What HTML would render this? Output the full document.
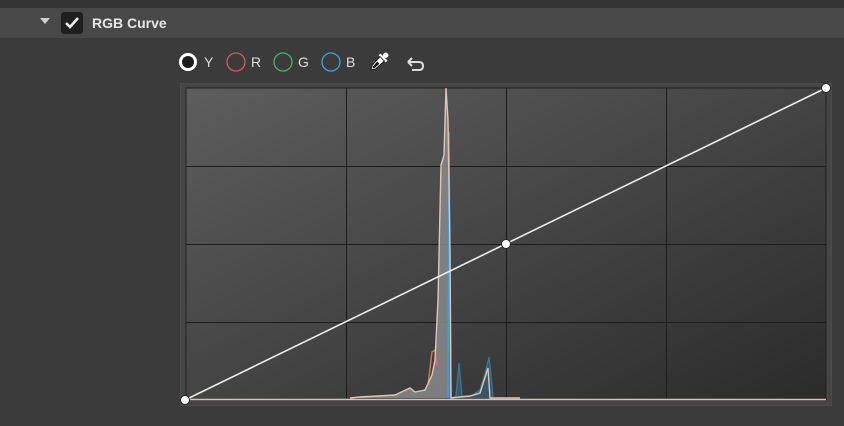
<!DOCTYPE html>
<html><head><meta charset="utf-8"><style>
html,body{margin:0;padding:0}
body{width:844px;height:426px;background:#3b3b3b;position:relative;overflow:hidden;font-family:"Liberation Sans",sans-serif}
.top{position:absolute;left:0;top:0;width:844px;height:8px;background:#333}
.hdr{position:absolute;left:0;top:8px;width:844px;height:30px;background:#484848}
.lbl{position:absolute;font-size:14px;color:#ddd;top:54px}
</style></head><body>
<div class="top"></div>
<div class="hdr"></div>
<svg width="844" height="426" style="position:absolute;left:0;top:0">
<defs>
<linearGradient id="g" x1="0" y1="0" x2="1" y2="1">
<stop offset="0" stop-color="#5d5d5d"/><stop offset="1" stop-color="#2b2b2b"/></linearGradient>
</defs>
<polygon points="40,18 50,18 45,24" fill="#cfcfcf"/>
<rect x="61" y="12" width="22" height="22" rx="3" fill="#1f1f1f"/>
<polyline points="66,23 70,27 78,18" fill="none" stroke="#eee" stroke-width="2.6"/>
<text x="92" y="28" font-family="Liberation Sans" font-weight="bold" font-size="14" fill="#e6e6e6">RGB Curve</text>
<circle cx="188" cy="62" r="7.5" fill="#1c1c1c" stroke="#fff" stroke-width="3"/>
<circle cx="236" cy="62" r="9" fill="none" stroke="#d25a5a" stroke-width="1.3"/>
<circle cx="283" cy="62" r="9" fill="none" stroke="#48b06a" stroke-width="1.3"/>
<circle cx="331" cy="62" r="9" fill="none" stroke="#3ba3d8" stroke-width="1.3"/>
<g transform="rotate(45 379 62)">
<rect x="376.5" y="50" width="5" height="5" rx="2" fill="#fff"/>
<rect x="374" y="55" width="10" height="2.5" fill="#fff"/>
<path d="M376,57.5 L382,57.5 L381.5,69 L379,73 L376.5,69 Z" fill="#fff" stroke="#111" stroke-width="0.8"/>
<path d="M377.5,63 L380.5,63 L380.2,69 L379,71 L377.8,69 Z" fill="#111"/>
</g>
<path d="M408,62 L419,62 Q423,62 423,66 Q423,70 419,70 L412,70 M408,62 L412,58 M408,62 L412,66" stroke="#ddd" stroke-width="2" fill="none"/>
<rect x="180.5" y="83.5" width="651" height="322" fill="#454545" stroke="#4c4c4c"/>
<rect x="186" y="88" width="640" height="312" fill="url(#g)" stroke="#222" stroke-width="1"/>
<g stroke="#1c1c1c" stroke-width="1">
<line x1="346.5" y1="88" x2="346.5" y2="400"/><line x1="506.5" y1="88" x2="506.5" y2="400"/><line x1="666.5" y1="88" x2="666.5" y2="400"/>
<line x1="186" y1="166.5" x2="826" y2="166.5"/><line x1="186" y1="244.5" x2="826" y2="244.5"/><line x1="186" y1="322.5" x2="826" y2="322.5"/>
</g>
<polygon points="350,398 360,397 395,395 410,388 415,392 425,390 432,375 435,360 438,300 441,165 444,155 446,88 448,120 450,250 451,398" fill="#8a8a8a" opacity="0.85"/>
<polyline points="452,398 456,396 459,363 462,396 470,397 480,390 485,374 489,357 491,375 493,398" fill="#3a6a85" opacity="0.6" stroke="#3ba3d8" stroke-width="1.2"/>
<polyline points="428,385 432,352 435,350 437,365" fill="none" stroke="#c8775a" stroke-width="1.5"/>
<polyline points="448,398 449,132 451,398" fill="#3b8ab8" stroke="#3ba3d8" stroke-width="1.3"/>
<polyline points="350,398 360,397 395,395 410,388 415,392 425,390 432,375 435,360 438,300 441,165 444,155 446,88 448,120 450,250 451,398 460,397 470,396 480,393 488,368 490,398 520,398" fill="none" stroke="#e0c4b8" stroke-width="1.4"/>
<line x1="186" y1="399.5" x2="826" y2="399.5" stroke="#d8c2b8" stroke-width="1.5"/>
<line x1="185" y1="400" x2="826" y2="88" stroke="#eee" stroke-width="1.6"/>
<circle cx="185" cy="400" r="4.5" fill="#fff" stroke="#222" stroke-width="1"/>
<circle cx="506" cy="244" r="4.5" fill="#fff" stroke="#222" stroke-width="1"/>
<circle cx="826" cy="88" r="4.5" fill="#fff" stroke="#222" stroke-width="1"/>
</svg>
<div class="lbl" style="left:204px">Y</div>
<div class="lbl" style="left:251px">R</div>
<div class="lbl" style="left:298px">G</div>
<div class="lbl" style="left:346px">B</div>
</body></html>
